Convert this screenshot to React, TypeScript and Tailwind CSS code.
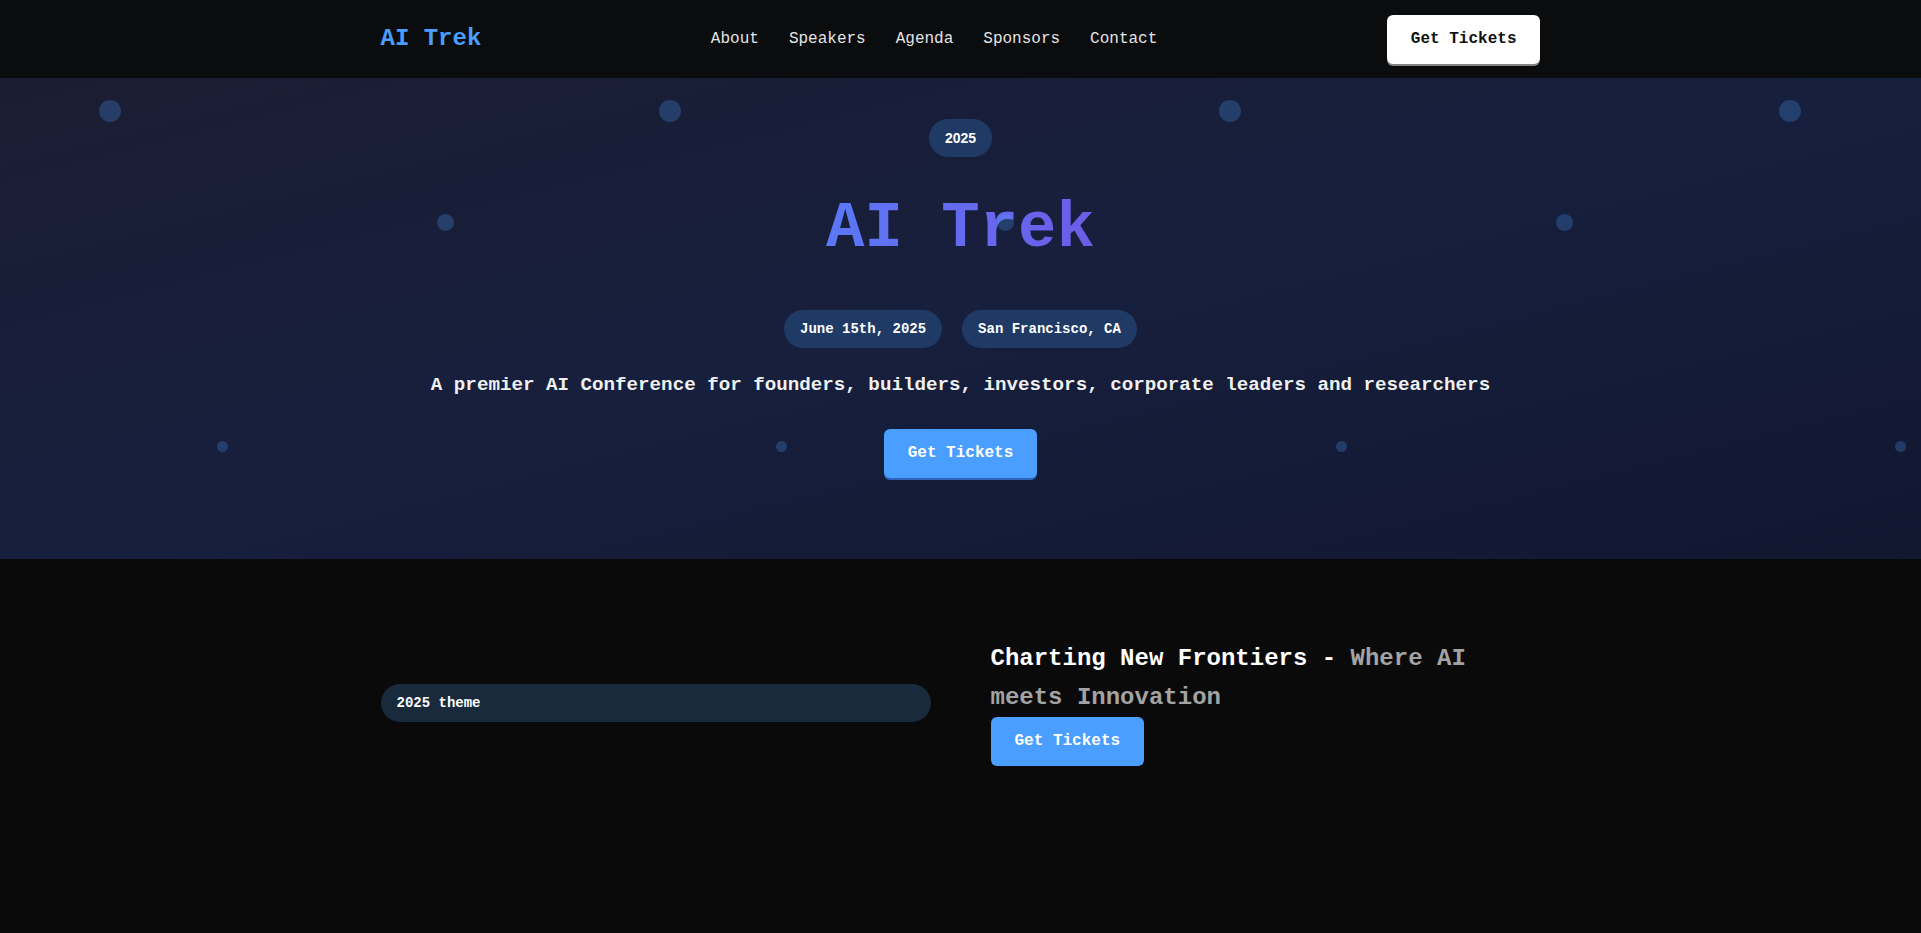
const navLinks = ["About", "Speakers", "Agenda", "Sponsors", "Contact"]

const dots = [
  { size: "w-[22px] h-[22px]", left: "left-[99px]", top: "top-[22px]" },
  { size: "w-[22px] h-[22px]", left: "left-[659px]", top: "top-[22px]" },
  { size: "w-[22px] h-[22px]", left: "left-[1219px]", top: "top-[22px]" },
  { size: "w-[22px] h-[22px]", left: "left-[1779px]", top: "top-[22px]" },
  { size: "w-[17px] h-[17px]", left: "left-[437px]", top: "top-[136px]" },
  { size: "w-[17px] h-[17px]", left: "left-[997px]", top: "top-[136px]" },
  { size: "w-[17px] h-[17px]", left: "left-[1556px]", top: "top-[136px]" },
  { size: "w-[11px] h-[11px]", left: "left-[217px]", top: "top-[363px]" },
  { size: "w-[11px] h-[11px]", left: "left-[776px]", top: "top-[363px]" },
  { size: "w-[11px] h-[11px]", left: "left-[1336px]", top: "top-[363px]" },
  { size: "w-[11px] h-[11px]", left: "left-[1895px]", top: "top-[363px]" },
]

export default function App() {
  return (
    <div className="min-h-screen bg-[#0a0a0a] text-white" style={{ fontFamily: '"Liberation Mono", "Courier New", monospace' }}>
      <nav className="bg-[#0b0c0e] h-[78px]">
        <div className="w-[1160px] mx-auto h-full flex justify-between items-center">
          <a href="#" className="text-2xl font-bold text-[#4a9eff]">
            AI Trek
          </a>
          <div className="flex gap-[30px]">
            {navLinks.map((item) => (
              <a key={item} href={`#${item.toLowerCase()}`} className="text-base text-[#e5e5e5] hover:opacity-75">
                {item}
              </a>
            ))}
          </div>
          <button className="bg-white text-[#111] font-bold text-base leading-[25px] px-6 py-3 rounded-md shadow-[0_2px_0_rgba(160,160,160,0.8)]">
            Get Tickets
          </button>
        </div>
      </nav>

      <section className="relative overflow-hidden bg-gradient-to-br from-[#1b1d33] via-[#161f3d] to-[#121730] pt-[41px] pb-[81px]">
        <div className="relative flex flex-col items-center">
          <span
            className="bg-[#203a66] rounded-full px-4 py-[9px] text-sm leading-5 font-bold"
            style={{ fontFamily: '"Liberation Sans", Arial, sans-serif' }}
          >
            2025
          </span>
          <h1 className="mt-10 text-[64px] leading-none font-bold bg-gradient-to-r from-[#5a78f7] to-[#6c5ce7] bg-clip-text text-transparent">
            AI Trek
          </h1>
          <div className="mt-[49px] flex gap-5">
            <span className="bg-[#203a66] rounded-full px-4 py-[9px] text-sm leading-5 font-bold">June 15th, 2025</span>
            <span className="bg-[#203a66] rounded-full px-4 py-[9px] text-sm leading-5 font-bold">San Francisco, CA</span>
          </div>
          <p className="mt-[23px] text-[19.2px] leading-7 font-bold text-[#f0f0f0]">
            A premier AI Conference for founders, builders, investors, corporate leaders and researchers
          </p>
          <button className="mt-[30px] bg-[#4a9eff] text-white font-bold text-base leading-[25px] px-6 py-3 rounded-md shadow-[0_2px_0_rgba(50,110,200,0.9)]">
            Get Tickets
          </button>
        </div>
        {dots.map((d, i) => (
          <span key={i} className={`absolute rounded-full bg-[#4a9eff]/25 ${d.size} ${d.left} ${d.top}`} />
        ))}
      </section>

      <section className="py-20">
        <div className="w-[1160px] mx-auto grid grid-cols-2 gap-[60px] items-center">
          <div className="bg-[#1a2a3d] rounded-full h-[38px] px-4 flex items-center text-sm font-bold">
            2025 theme
          </div>
          <div>
            <h2 className="text-2xl leading-[39px] font-bold">
              Charting New Frontiers - <span className="text-[#a3a3a3]">Where AI meets Innovation</span>
            </h2>
            <button className="bg-[#4a9eff] text-white font-bold text-base leading-[25px] px-6 py-3 rounded-md">
              Get Tickets
            </button>
          </div>
        </div>
      </section>
    </div>
  )
}
